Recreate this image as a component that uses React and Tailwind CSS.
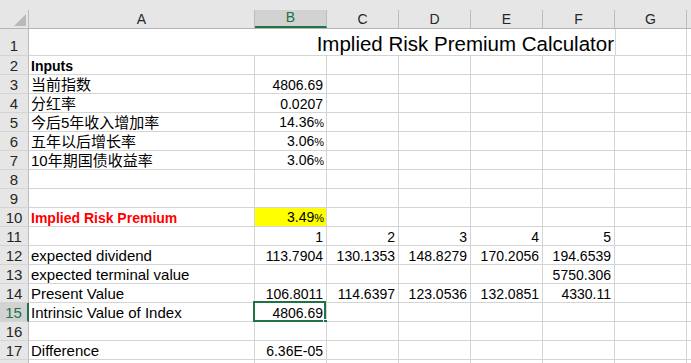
import React from 'react';

const COLS = ['A', 'B', 'C', 'D', 'E', 'F', 'G', ''];
const WIDTHS = ['w-[226px]', 'w-[72px]', 'w-[72px]', 'w-[72px]', 'w-[72px]', 'w-[72px]', 'w-[72px]', 'w-[40px]'];

// each row: label in A, values from B onwards
const rows = [
  { n: 2, a: 'Inputs', bold: true },
  { n: 3, a: '当前指数', v: ['4806.69'] },
  { n: 4, a: '分红率', v: ['0.0207'] },
  { n: 5, a: '今后5年收入增加率', v: ['14.36%'] },
  { n: 6, a: '五年以后增长率', v: ['3.06%'] },
  { n: 7, a: '10年期国债收益率', v: ['3.06%'] },
  { n: 8 },
  { n: 9 },
  { n: 10, a: 'Implied Risk Premium', red: true, v: ['3.49%'], yellow: true },
  { n: 11, v: ['1', '2', '3', '4', '5'] },
  { n: 12, a: 'expected dividend', v: ['113.7904', '130.1353', '148.8279', '170.2056', '194.6539'] },
  { n: 13, a: 'expected terminal value', v: ['', '', '', '', '5750.306'] },
  { n: 14, a: 'Present Value', v: ['106.8011', '114.6397', '123.0536', '132.0851', '4330.11'] },
  { n: 15, a: 'Intrinsic Value of Index', v: ['4806.69'], selected: true },
  { n: 16 },
  { n: 17, a: 'Difference', v: ['6.36E-05'] },
  { n: '' },
];

function Num({ text }) {
  if (text.endsWith('%')) {
    return (
      <span>
        {text.slice(0, -1)}
        <span className="text-[11px] tracking-[-1px]">%</span>
      </span>
    );
  }
  return <span>{text}</span>;
}

function Row({ row }) {
  const vals = row.v || [];
  return (
    <div className="flex h-[19px]">
      <div
        className={
          'w-[29px] shrink-0 flex items-end justify-center border-b border-[#d4d4d4] text-[15px] leading-[17px] ' +
          (row.selected
            ? 'bg-[#d2d2d2] text-[#217346] border-r-2 border-r-[#217346]'
            : 'bg-[#e6e6e6] text-[#262626] border-r border-r-[#bcbcbc]')
        }
      >
        {row.n}
      </div>
      <div
        className={
          'w-[226px] shrink-0 flex items-end pl-[2px] border-r border-b border-[#d4d4d4] leading-[16px] whitespace-nowrap ' +
          (row.bold || row.red ? 'font-bold text-[14px] ' : 'text-[15px] ') +
          (row.red ? 'text-[#ff0000]' : 'text-black')
        }
      >
        {row.a}
      </div>
      {COLS.slice(1).map((c, i) => (
        <div
          key={i}
          className={
            WIDTHS[i + 1] +
            ' shrink-0 relative flex items-end justify-end pr-[3px] border-r border-b border-[#d4d4d4] text-[14px] leading-[16px] text-black ' +
            (i === 0 && row.yellow ? 'bg-[#ffff00]' : 'bg-white')
          }
        >
          {vals[i] ? <Num text={vals[i]} /> : null}
          {i === 0 && row.selected && (
            <>
              <div className="absolute left-[-2px] top-[-2px] right-[0px] bottom-[-1px] border-2 border-[#217346]" />
              <div className="absolute right-[-3px] bottom-[-4px] w-[6px] h-[6px] bg-[#217346] border border-white" />
            </>
          )}
        </div>
      ))}
    </div>
  );
}

export default function App() {
  return (
    <div
      className="w-[691px] h-[363px] overflow-hidden bg-white"
      style={{ fontFamily: '"Liberation Sans", "Noto Sans CJK SC", sans-serif' }}
    >
      {/* column headers */}
      <div className="flex h-[29px] bg-[#e6e6e6] border-b border-[#b4b4b4]">
        <div className="w-[29px] shrink-0 relative border-r border-[#bcbcbc] mt-[10px]">
          <svg className="absolute left-[14px] top-[4px]" width="12" height="12" viewBox="0 0 12 12">
            <polygon points="12,0 12,12 0,12" fill="#b9b9b9" />
          </svg>
        </div>
        {COLS.map((c, i) => (
          <div
            key={i}
            className={
              WIDTHS[i] +
              ' shrink-0 mt-[10px] flex items-end justify-center text-[14px] leading-[17px] ' +
              (c === 'B'
                ? 'bg-[#d2d2d2] text-[#217346] border-b-2 border-[#217346] border-r border-r-[#bcbcbc]'
                : 'text-[#262626] border-r border-[#bcbcbc]')
            }
          >
            {c}
          </div>
        ))}
      </div>

      {/* row 1 with title */}
      <div className="flex h-[27px]">
        <div className="w-[29px] shrink-0 flex items-end justify-center bg-[#e6e6e6] border-r border-[#bcbcbc] border-b border-b-[#d4d4d4] text-[15px] leading-[19px] text-[#262626]">
          1
        </div>
        <div className="w-[586px] shrink-0 flex items-end justify-end pr-[1px] border-b border-[#d4d4d4] text-[20.5px] leading-[23px] text-black whitespace-nowrap">
          Implied Risk Premium Calculator
        </div>
        <div className="w-[72px] shrink-0 border-l border-r border-b border-[#d4d4d4]" />
        <div className="w-[40px] shrink-0 border-b border-[#d4d4d4]" />
      </div>

      {rows.map((r, i) => (
        <Row key={i} row={r} />
      ))}
    </div>
  );
}
